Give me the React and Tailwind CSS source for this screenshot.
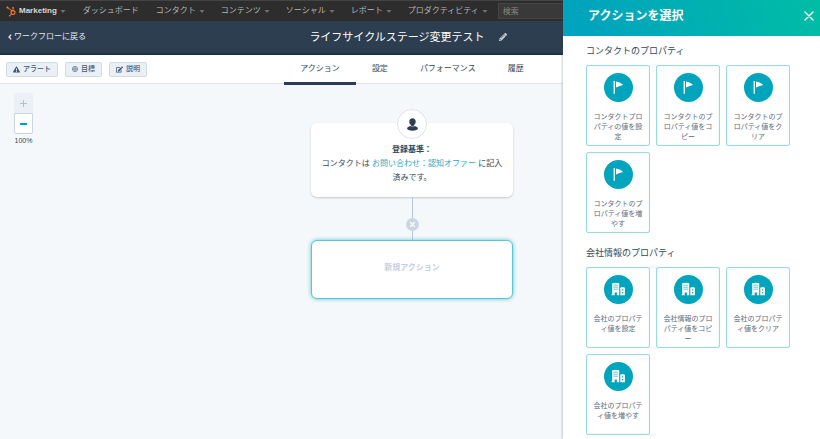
import { FaHubspot, FaExclamationTriangle, FaEdit, FaPencilAlt } from "react-icons/fa"

const navItems = [
  { label: "コンタクト" },
  { label: "コンテンツ" },
  { label: "ソーシャル" },
  { label: "レポート" },
  { label: "プロダクティビティ" },
]

const tabs = ["アクション", "設定", "パフォーマンス", "履歴"]

const sections = [
  {
    title: "コンタクトのプロパティ",
    icon: FlagIcon,
    actions: [
      "コンタクトプロパティの値を設定",
      "コンタクトのプロパティ値をコピー",
      "コンタクトのプロパティ値をクリア",
      "コンタクトのプロパティ値を増やす",
    ],
  },
  {
    title: "会社情報のプロパティ",
    icon: BuildingIcon,
    actions: [
      "会社のプロパティ値を設定",
      "会社情報のプロパティ値をコピー",
      "会社のプロパティ値をクリア",
      "会社のプロパティ値を増やす",
    ],
  },
]

function FlagIcon() {
  return (
    <svg className="h-[29px] w-[29px]" viewBox="0 0 29 29" fill="white" aria-hidden="true">
      <rect x="9.600" y="8" width="1.300" height="12.800" />
      <path d="M12 8.600c2.500 .3 4.400 1.500 7.200 3.300c-2.600 .8-4.600 1.200-7.200 2.700z" />
    </svg>
  )
}

function BuildingIcon() {
  return (
    <svg className="h-[29px] w-[29px]" viewBox="0 0 29 29" aria-hidden="true">
      <path fill="white" d="M8.200 8.300q3.500-1 7 0V20.300H12.900V17.600H10.700V20.300H7.500V19.300H8.200z" />
      <path stroke="#00a4bd" strokeWidth="0.600" d="M9.300 10.200h4.800M9.300 12.200h4.800M9.300 14.200h4.800" />
      <path fill="white" d="M16.300 13.200q0-.9 1-.9h2.600q1 0 1 .9V20.300H16.300z" />
      <path fill="#00a4bd" d="M18 14.300h1.200v1.300H18zM18 17h1.200v1.300H18z" />
    </svg>
  )
}

function PersonIcon() {
  return (
    <svg className="h-[13px] w-[13px]" viewBox="0 0 13 13" fill="#2d3e50" aria-hidden="true">
      <path d="M6.500 .2c2 0 3.200 1.400 3.200 3.300c0 1.700-.8 3-1.700 3.700v.9c2.200 .4 3.900 1.100 3.900 2.500c0 1.500-2.600 2.100-5.400 2.100s-5.400-.6-5.400-2.100c0-1.400 1.700-2.100 3.900-2.500v-.9c-.9-.7-1.700-2-1.700-3.700c0-1.900 1.200-3.300 3.200-3.300z" />
      <path d="M4.300 7.700q2.200 1.700 4.400 0" fill="none" stroke="white" strokeWidth="0.500" />
    </svg>
  )
}

function TargetIcon() {
  return (
    <svg className="h-[6px] w-[6px]" viewBox="0 0 12 12" fill="none" stroke="currentColor" aria-hidden="true">
      <circle cx="6" cy="6" r="5.200" strokeWidth="1.300" />
      <circle cx="6" cy="6" r="2.400" strokeWidth="1.500" />
    </svg>
  )
}

function Caret() {
  return (
    <svg className="h-[3px] w-[6px]" viewBox="0 0 6 3" fill="#6f6f6f" aria-hidden="true">
      <path d="M0.500 0h5L3 3z" />
    </svg>
  )
}

function ToolButton({ icon, label }) {
  return (
    <button className="flex h-[15px] items-center gap-[3px] rounded-xs border border-[#cfdbe7] bg-[#eaf0f6] px-[6px] text-[7px] font-medium text-[#425b76]">
      {icon}
      {label}
    </button>
  )
}

function TopNav() {
  return (
    <nav className="flex h-[21px] items-center gap-4 border-t border-[#444] bg-[#2d2d2d] pl-[6px] text-[#b4b4b4]">
      <button className="flex items-center gap-[3px] font-bold text-[#d8d8d8]">
        <FaHubspot className="h-[11px] w-[10px] text-[#ff7a33]" />
        Marketing
        <Caret />
      </button>
      <a href="#dashboard" className="shrink-0 px-px">ダッシュボード</a>
      {navItems.map((item) => (
        <button key={item.label} className="flex shrink-0 items-center gap-[3px]">
          {item.label}
          <Caret />
        </button>
      ))}
      <input
        type="search"
        aria-label="検索"
        placeholder="検索"
        className="-ml-[6px] h-4 min-w-0 flex-1 border border-[#454545] bg-[#393939] px-1 placeholder:text-[#858585]"
      />
    </nav>
  )
}

function ActionPanel() {
  return (
    <aside className="absolute inset-y-0 right-0 w-[257px] bg-white shadow-[-1px_0_2px_rgba(45,62,80,0.25)]">
      <header className="flex h-9 items-center justify-between bg-[linear-gradient(70deg,#00a4bd_10%,#00bda5)] pl-[25px] pr-[6px] text-white">
        <h2 className="pb-1 text-[12px] font-bold">アクションを選択</h2>
        <button aria-label="閉じる" className="pb-1">
          <svg className="h-[10px] w-[10px]" viewBox="0 0 10 10" stroke="white" strokeWidth="1.300" strokeLinecap="round">
            <path d="M1 1l8 8M9 1l-8 8" />
          </svg>
        </button>
      </header>
      <div className="flex flex-col gap-[14px] pl-[23px] pt-[9px]">
        {sections.map(({ title, icon: Icon, actions }) => (
          <section key={title}>
            <h3 className="mb-2 text-[9px] leading-3 text-[#33475b]">{title}</h3>
            <div className="grid grid-cols-[repeat(3,64px)] gap-x-[6px] gap-y-[6px]">
              {actions.map((action) => (
                <button
                  key={action}
                  className="flex h-[81px] flex-col items-center gap-[10px] rounded-xs border border-[#99dbe5] px-[6px] pt-[7px] text-[7px] leading-[10px] text-[#5a6b7e] shadow-[inset_0_0_1px_#99dbe5]"
                >
                  <span className="rounded-full bg-[#00a4bd]">
                    <Icon />
                  </span>
                  <span className="text-center [line-break:anywhere]">{action}</span>
                </button>
              ))}
            </div>
          </section>
        ))}
      </div>
    </aside>
  )
}

function Workflow() {
  return (
    <div className="flex flex-col items-center pl-1">
      <div className="flex w-[202px] flex-col items-center rounded-md bg-white px-2 pb-3 shadow-[0_1px_2px_rgba(45,62,80,0.25)]">
        <span className="-mt-[14px] flex h-[30px] w-[30px] items-center justify-center rounded-full border border-[#dfe3eb] bg-white">
          <PersonIcon />
        </span>
        <p className="mt-1 text-center leading-[14px] text-[#33475b]">
          <strong className="block">登録基準：</strong>
          コンタクトは <a href="#form" className="text-[#2aa9bf]">お問い合わせ：認知オファー</a> に記入
          <br />
          済みです。
        </p>
      </div>
      <div className="h-[21px] w-px bg-[#b8c7d8]" />
      <button
        aria-label="削除"
        className="flex h-[13px] w-[13px] items-center justify-center rounded-full bg-[#cbd6e2]"
      >
        <svg className="h-[7px] w-[7px]" viewBox="0 0 6 6" stroke="white" strokeWidth="1.100">
          <path d="M1 1l4 4M5 1l-4 4" />
        </svg>
      </button>
      <div className="h-[9px] w-px bg-[#b8c7d8]" />
      <button className="h-[59px] w-[202px] rounded-md border border-[#5cc5d3] bg-white pb-1 font-bold text-[#c3cfdc] shadow-[0_0_4px_#5cc5d3]">
        新規アクション
      </button>
    </div>
  )
}

export default function App() {
  return (
    <div className="relative flex min-h-screen flex-col overflow-hidden bg-[#f5f8fa] font-['Liberation_Sans','Noto_Sans_CJK_JP',sans-serif] text-[8px] leading-3">
      <TopNav />

      <header className="grid h-[34px] grid-cols-[1fr_auto_1fr] items-center border-b-2 border-[#1f3044] bg-[#2d3e50] pl-2 pr-3 text-white">
        <a href="#workflows" className="flex items-center gap-[2px] text-[#e5eaf0]">
          <svg className="h-[6px] w-[4px]" viewBox="0 0 4 6" fill="none" stroke="currentColor" strokeWidth="1.300">
            <path d="M3.200 .6L1 3l2.200 2.400" />
          </svg>
          ワークフローに戻る
        </a>
        <div className="flex items-center gap-[14px]">
          <h1 className="text-[11px]">ライフサイクルステージ変更テスト</h1>
          <button aria-label="名前を編集">
            <FaPencilAlt className="h-2 w-2 text-[#cbd6e2]" />
          </button>
        </div>
      </header>

      <div className="grid h-[29px] grid-cols-[1fr_auto_1fr] border-b border-[#dfe3eb] bg-white pl-[6px] pr-[2px]">
        <div className="flex items-center gap-[7px]">
          <ToolButton icon={<FaExclamationTriangle className="h-[7px] w-[7px]" />} label="アラート" />
          <ToolButton icon={<TargetIcon />} label="目標" />
          <ToolButton icon={<FaEdit className="h-[7px] w-[7px]" />} label="説明" />
        </div>
        <div role="tablist" className="-mb-[2px] flex text-[#33475b]">
          {tabs.map((tab, i) => (
            <button
              key={tab}
              role="tab"
              aria-selected={i === 0}
              className={`border-b-[3px] px-4 ${i === 0 ? "border-[#2d3e50]" : "border-transparent"}`}
            >
              {tab}
            </button>
          ))}
        </div>
      </div>

      <main className="grid flex-1 grid-cols-[1fr_auto_1fr] items-start">
        <div className="ml-[14px] mt-[9px] w-[19px] text-center text-[7px] text-[#33475b]">
          <button aria-label="拡大" className="flex h-[20px] w-full items-center justify-center rounded-t-xs bg-[#eaf0f6]">
            <svg className="h-[7px] w-[7px]" viewBox="0 0 7 7" stroke="#b0c1d4">
              <path d="M0 3.500h7M3.500 0v7" />
            </svg>
          </button>
          <button aria-label="縮小" className="flex h-[21px] w-full items-center justify-center rounded-b-xs border border-[#cbd6e2] bg-white">
            <svg className="h-[2px] w-[7px]" viewBox="0 0 7 2" fill="#00a4bd">
              <rect width="7" height="2" />
            </svg>
          </button>
          <span className="block pt-px">100%</span>
        </div>
        <div className="pt-[39px]">
          <Workflow />
        </div>
      </main>

      <ActionPanel />
    </div>
  )
}
